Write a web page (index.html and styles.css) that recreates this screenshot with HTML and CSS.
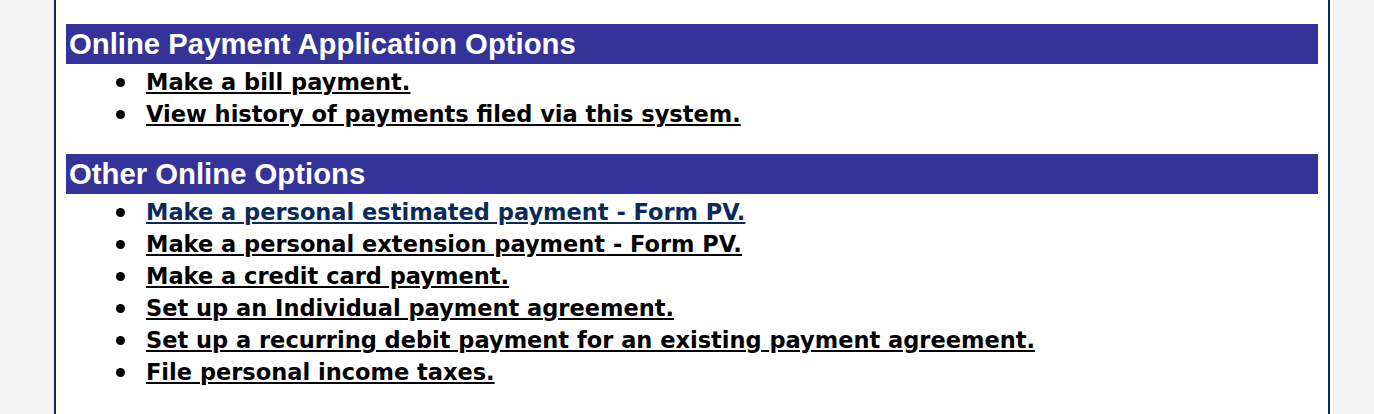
FILE: index.html
```
<!DOCTYPE html>
<html>
<head>
<meta charset="utf-8">
<link rel="stylesheet" href="styles.css">
</head>
<body>
<div class="panel">
  <h2 class="bar">Online Payment Application Options</h2>
  <ul class="opts">
    <li><a href="#">Make a bill payment.</a></li>
    <li><a href="#">View history of payments filed via this system.</a></li>
  </ul>
  <h2 class="bar">Other Online Options</h2>
  <ul class="opts">
    <li><a href="#" class="hot">Make a personal estimated payment - Form PV.</a></li>
    <li><a href="#">Make a personal extension payment - Form PV.</a></li>
    <li><a href="#">Make a credit card payment.</a></li>
    <li><a href="#">Set up an Individual payment agreement.</a></li>
    <li><a href="#">Set up a recurring debit payment for an existing payment agreement.</a></li>
    <li><a href="#">File personal income taxes.</a></li>
  </ul>
</div>
</body>
</html>
```
FILE: styles.css
```
html, body {
  margin: 0;
  padding: 0;
  background: #f4f4f4;
  height: 100%;
}
.panel {
  margin-left: 54px;
  width: 1276px;
  min-height: 414px;
  box-sizing: border-box;
  background: #fff;
  border-left: 2px solid #0b2a5a;
  border-right: 2px solid #0b2a5a;
  padding: 24px 10px 0 10px;
  box-shadow: 3px 0 0 #fff;
}
.bar {
  margin: 0;
  height: 40px;
  line-height: 40px;
  background: #333399;
  color: #fff;
  font-family: "Liberation Sans", Arial, sans-serif;
  font-weight: bold;
  font-size: 29.3px;
  padding-left: 3px;
}
.opts {
  margin: 2px 0 24px 0;
  padding-left: 80px;
  list-style: none;
  font-family: "DejaVu Sans", Verdana, sans-serif;
  font-weight: bold;
  font-size: 22.5px;
  line-height: 32px;
}
.opts li {
  display: flex;
  align-items: center;
}
.opts li::before {
  content: "";
  flex: none;
  width: 9px;
  height: 9px;
  border-radius: 50%;
  background: #000;
  margin-left: -30px;
  margin-right: 21px;
}
.opts a {
  color: #000;
  text-decoration: underline;
}
.opts a.hot {
  color: #0b2a5a;
}
```
